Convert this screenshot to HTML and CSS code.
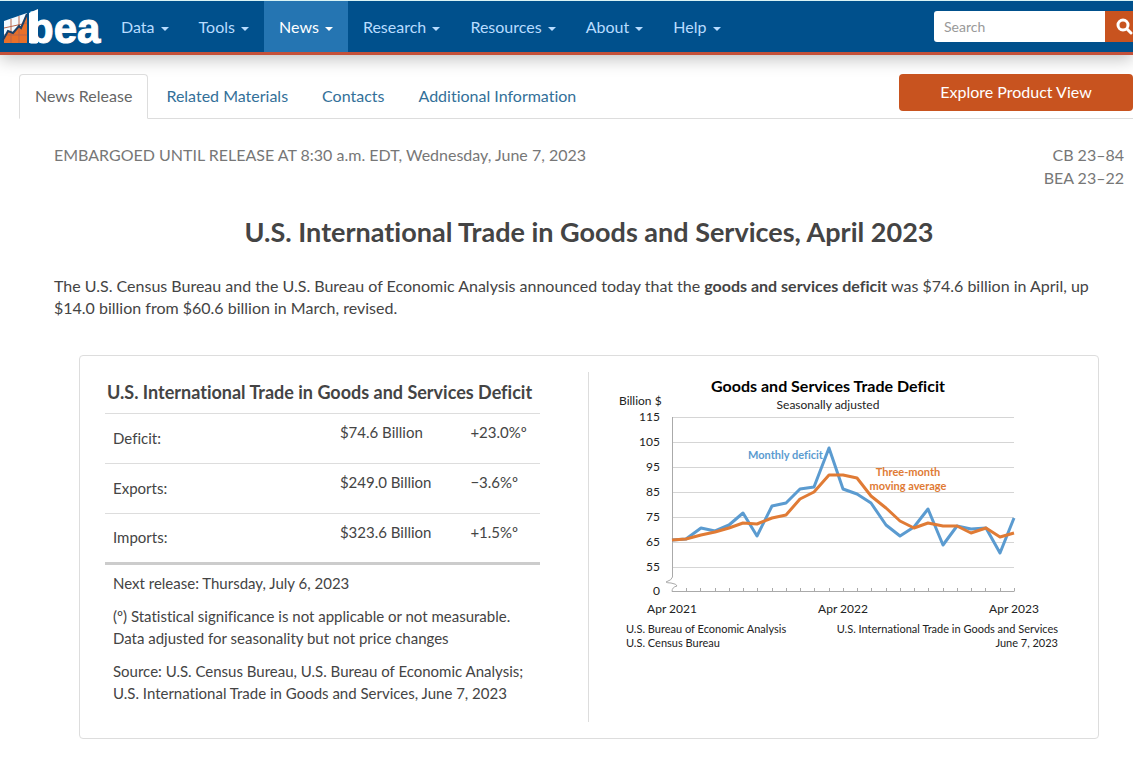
FILE: index.html
```html
<!DOCTYPE html>
<html lang="en">
<head>
    <meta charset="UTF-8">
    <meta name="viewport" content="width=device-width, initial-scale=1.0">
    <title>U.S. International Trade in Goods and Services, April 2023</title>
    <link rel="stylesheet" href="styles.css">
</head>
<body>
    <header class="header">
        <a class="logo" href="#" aria-label="bea home">
            <svg width="100" height="36" viewBox="0 0 100 36">
                <polygon points="1,12 24,4 24,34 1,34" fill="#f4faff"/>
                <polygon points="1,31 5,22 10,24 16,17 18,19 24,6 24,34 1,34" fill="#e8702a"/>
                <path d="M1 19L24 14M1 26H24M8 10V34M16 7V34" stroke="#b9654a" stroke-width="1" fill="none"/>
                <path d="M0 31L5 22L10 24L16 17L18 19L24 5" stroke="#1c3f66" stroke-width="2" fill="none"/>
                <polygon points="26,4 35,0 35,34 26,34" fill="#fff"/>
                <text class="logo-text" x="25" y="34">bea</text>
            </svg>
        </a>
        <nav class="nav">
            <a href="#">Data <span class="caret"></span></a>
            <a href="#">Tools <span class="caret"></span></a>
            <a class="active" href="#">News <span class="caret"></span></a>
            <a href="#">Research <span class="caret"></span></a>
            <a href="#">Resources <span class="caret"></span></a>
            <a href="#">About <span class="caret"></span></a>
            <a href="#">Help <span class="caret"></span></a>
        </nav>
        <form class="search">
            <input type="text" placeholder="Search" aria-label="Search">
            <button type="button" aria-label="Submit search">
                <svg width="17" height="17" viewBox="0 0 17 17">
                    <circle cx="7" cy="7" r="5" fill="none" stroke="#fff" stroke-width="3"/>
                    <path d="M11 11L15 15" stroke="#fff" stroke-width="3" stroke-linecap="round"/>
                </svg>
            </button>
        </form>
    </header>

    <div class="tabs-row">
        <ul class="tabs">
            <li><a class="active" href="#">News Release</a></li>
            <li><a href="#">Related Materials</a></li>
            <li><a href="#">Contacts</a></li>
            <li><a href="#">Additional Information</a></li>
        </ul>
        <button type="button" class="explore">Explore Product View</button>
    </div>

    <main class="content">
        <div class="release-info">
            <span>EMBARGOED UNTIL RELEASE AT 8:30 a.m. EDT, Wednesday, June 7, 2023</span>
            <span class="numbers">CB 23–84<br>BEA 23–22</span>
        </div>

        <h1>U.S. International Trade in Goods and Services, April 2023</h1>

        <p class="intro">The U.S. Census Bureau and the U.S. Bureau of Economic Analysis announced today that the <strong>goods and services deficit</strong> was $74.6 billion in April, up $14.0 billion from $60.6 billion in March, revised.</p>

        <section class="card">
            <div class="summary">
                <h2>U.S. International Trade in Goods and Services Deficit</h2>
                <table>
                    <tr>
                        <th scope="row">Deficit:</th>
                        <td>$74.6 Billion</td>
                        <td>+23.0%º</td>
                    </tr>
                    <tr>
                        <th scope="row">Exports:</th>
                        <td>$249.0 Billion</td>
                        <td>−3.6%º</td>
                    </tr>
                    <tr>
                        <th scope="row">Imports:</th>
                        <td>$323.6 Billion</td>
                        <td>+1.5%º</td>
                    </tr>
                </table>
                <div class="notes">
                    <p>Next release: Thursday, July 6, 2023</p>
                    <p>(º) Statistical significance is not applicable or not measurable.<br>Data adjusted for seasonality but not price changes</p>
                    <p>Source: U.S. Census Bureau, U.S. Bureau of Economic Analysis;<br>U.S. International Trade in Goods and Services, June 7, 2023</p>
                </div>
            </div>

            <div class="chart">
                <svg viewBox="0 2 480 290" role="img" aria-label="Goods and Services Trade Deficit">
                    <text class="chart-title" x="228" y="22">Goods and Services Trade Deficit</text>
                    <text class="chart-subtitle" x="228" y="39">Seasonally adjusted</text>
                    <text class="unit" x="19" y="35">Billion $</text>

                    <!-- grid lines -->
                    <path class="grid" d="M72 47.500H414M72 72.500H414M72 97.500H414M72 122.500H414M72 147.500H414M72 172.500H414M72 197.500H414"/>

                    <!-- axes, with the break between 0 and 55 -->
                    <path class="axis" d="M72.500 47V207Q72 210 66 212Q67 213 71 213Q77 214 77 216Q72 217 72 221.500H414.500"/>
                    <path class="axis" d="M86.500 218V221M100.500 218V221M115.500 218V221M129.500 218V221M143.500 218V221M157.500 218V221M172.500 218V221M186.500 218V221M200.500 218V221M214.500 218V221M229.500 218V221M243.500 218V221M257.500 218V221M271.500 218V221M286.500 218V221M300.500 218V221M314.500 218V221M328.500 218V221M343.500 218V221M357.500 218V221M371.500 218V221M385.500 218V221M400.500 218V221M414.500 218V221"/>

                    <g class="y-labels">
                        <text x="60" y="51">115</text>
                        <text x="60" y="76">105</text>
                        <text x="60" y="101">95</text>
                        <text x="60" y="126">85</text>
                        <text x="60" y="151">75</text>
                        <text x="60" y="176">65</text>
                        <text x="60" y="201">55</text>
                        <text x="60" y="225">0</text>
                    </g>
                    <g class="x-labels">
                        <text x="72" y="243">Apr 2021</text>
                        <text x="243" y="243">Apr 2022</text>
                        <text x="414" y="243">Apr 2023</text>
                    </g>

                    <polyline class="line monthly" points="72,170 86,169 101,158 115,161 129,155 143,143 157,166 172,136 186,133 200,119 214,117 229,78 243,119 257,124 271,133 286,155 300,166 314,157 328,139 343,175 357,156 371,159 386,158 400,183 414,148"/>
                    <polyline class="line average" points="72,170 86,169 101,165 115,162 129,158 143,153 157,154 172,148 186,145 200,129 214,122 229,105 243,105 257,108 271,126 286,138 300,151 314,158 328,153 343,156 357,156 371,163 386,158 400,167 414,163"/>

                    <text class="label-monthly" x="148" y="89">Monthly deficit</text>
                    <text class="label-average" x="308" y="106">Three-month</text>
                    <text class="label-average" x="308" y="120">moving average</text>

                    <text class="source" x="26" y="263">U.S. Bureau of Economic Analysis</text>
                    <text class="source" x="26" y="277">U.S. Census Bureau</text>
                    <text class="source end" x="458" y="263">U.S. International Trade in Goods and Services</text>
                    <text class="source end" x="458" y="277">June 7, 2023</text>
                </svg>
            </div>
        </section>
    </main>
</body>
</html>
```
FILE: styles.css
```css
* {
    box-sizing: border-box;
}

body {
    margin: 0;
    font-family: Lato, sans-serif;
    font-size: 16px;
    font-variant-ligatures: none;
    line-height: 23px;
    color: #444;
    background-color: #fff;
    overflow-x: hidden;
}

a {
    text-decoration: none;
}

/* Header */
.header {
    display: flex;
    align-items: center;
    background-color: #00508c;
    border-top: 1px solid #d9f3f5;
    border-bottom: 3px solid #c4513a;
    box-shadow: 0 4px 16px rgba(0, 0, 0, 0.25);
}

.logo {
    display: flex;
    padding: 0 3px;
}

.logo svg {
    overflow: visible;
}

.logo-text {
    font-family: 'Liberation Sans', sans-serif;
    font-size: 42px;
    font-weight: bold;
    fill: #fff;
    stroke: #fff;
    stroke-width: 1px;
}

.nav {
    display: flex;
}

.nav a {
    padding: 14px 15px;
    color: #b8dcff;
}

.nav a.active {
    color: #fff;
    background-color: #2575b2;
}

.caret {
    display: inline-block;
    margin-left: 2px;
    vertical-align: middle;
    border-top: 4px solid;
    border-left: 4px solid transparent;
    border-right: 4px solid transparent;
}

.search {
    display: flex;
    margin-left: auto;
    margin-right: -12px;
}

.search input {
    width: 171px;
    height: 31px;
    padding: 0 10px;
    border: none;
    border-radius: 3px 0 0 3px;
    font-family: inherit;
    font-size: 14px;
}

.search input::placeholder {
    color: #999;
}

.search button {
    display: flex;
    align-items: center;
    width: 40px;
    height: 31px;
    padding: 0 11px;
    border: none;
    background-color: #c8531f;
}

/* Tabs */
.tabs-row {
    display: flex;
    justify-content: space-between;
    align-items: flex-start;
    margin: 19px 0 0 19px;
    border-bottom: 1px solid #ddd;
}

.tabs {
    display: flex;
    gap: 2px;
    margin: 0 0 -1px;
    padding: 0;
    list-style: none;
}

.tabs a {
    display: block;
    padding: 9px 15px 11px;
    border: 1px solid transparent;
    border-radius: 4px 4px 0 0;
    color: #337099;
}

.tabs a.active {
    color: #666;
    background-color: #fff;
    border-color: #ddd #ddd #fff;
}

.explore {
    width: 234px;
    height: 37px;
    padding: 0 0 2px;
    border: none;
    border-radius: 4px;
    background-color: #c8531f;
    color: #fff;
    font-family: inherit;
    font-size: 16px;
}

/* Content */
.content {
    padding: 24px 9px 26px 54px;
}

.release-info {
    display: flex;
    justify-content: space-between;
    color: #777;
}

.numbers {
    text-align: right;
}

h1 {
    margin: 27px 0;
    font-size: 27px;
    line-height: 32px;
    text-align: center;
}

.intro {
    margin: 0 0 36px;
    line-height: 22px;
}

.card {
    display: flex;
    margin: 0 25px;
    padding: 16px 0;
    border: 1px solid #ddd;
    border-radius: 4px;
}

.summary {
    width: 50%;
    padding: 8px 48px 7px 25px;
    border-right: 1px solid #ddd;
    font-size: 15px;
    line-height: 22px;
}

h2 {
    margin: 0;
    padding: 0 2px 8px;
    font-size: 18px;
    line-height: 25px;
    white-space: nowrap;
}

table {
    width: 100%;
    border-collapse: collapse;
    border-bottom: 3px solid #ccc;
}

th,
td {
    height: 50px;
    padding: 7px 0 9px;
    border-top: 1px solid #ddd;
    text-align: left;
    vertical-align: top;
}

th {
    padding-left: 8px;
    font-weight: normal;
    vertical-align: middle;
}

td {
    width: 30%;
}

td:last-child {
    width: 16%;
}

.notes {
    padding: 7px 0 0 8px;
    white-space: nowrap;
}

.notes p {
    margin: 0 0 11px;
}

/* Chart */
.chart {
    width: 50%;
    padding: 0 18px 0 11px;
}

.chart svg {
    display: block;
    width: 100%;
}

.chart text {
    font-size: 12px;
    fill: #222;
}

.chart .chart-title {
    font-size: 16px;
    font-weight: bold;
    text-anchor: middle;
    fill: #000;
}

.chart .chart-subtitle,
.x-labels {
    text-anchor: middle;
}

.y-labels {
    text-anchor: end;
}

.grid {
    stroke: #d5d5d5;
}

.axis {
    fill: none;
    stroke: #aaa;
}

.line {
    fill: none;
    stroke-width: 3;
    stroke-linejoin: round;
}

.monthly {
    stroke: #5b9bd0;
}

.average {
    stroke: #e07b35;
}

.chart .label-monthly {
    font-size: 11px;
    font-weight: bold;
    fill: #5b9bd0;
}

.chart .label-average {
    font-size: 11px;
    font-weight: bold;
    text-anchor: middle;
    fill: #e07b35;
}

.chart .source {
    font-size: 11px;
}

.chart .end {
    text-anchor: end;
}
```
